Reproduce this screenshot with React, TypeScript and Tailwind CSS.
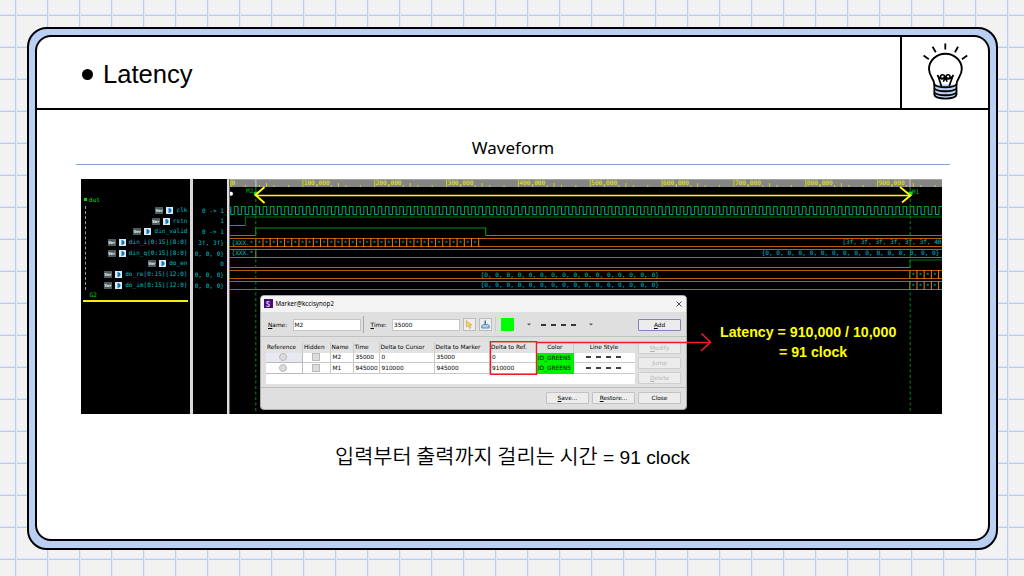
import React from "react";

const signals = [
  { name: "clk", value: "0 -> 1" },
  { name: "rstn", value: "1" },
  { name: "din_valid", value: "0 -> 1" },
  { name: "din_i[0:15][8:0]", value: "3f, 3f}" },
  { name: "din_q[0:15][8:0]", value: "0, 0, 0}" },
  { name: "do_en", value: "0" },
  { name: "do_re[0:15][12:0]", value: "0, 0, 0}" },
  { name: "do_im[0:15][12:0]", value: "0, 0, 0}" },
];

const PERIOD = 7.19;
const T0 = 230.8;
const CYAN = "#00a0a8";
const ORANGE = "#bb5e08";

const range = (n: number) => Array.from({ length: n }, (_, i) => i);

function Bulb() {
  return (
    <svg viewBox="918 38 56 66" className="h-[66px] w-14" fill="none" stroke="#000" strokeLinecap="round" strokeLinejoin="round">
      <path d="M945.3 43.6v5.800M932.600 46.800l3.200 5.400M958 46.800l-3 5.400M923.600 55.600l5.200 3.600M967.200 55.600l-5.200 3.600" strokeWidth="1.8" strokeLinecap="butt" />
      <path d="M934.3 84v10.5c0 5.5 22.2 5.5 22.2 0V84z" fill="#bcd0ee" stroke="none" />
      <path d="M934.4 84.5c-.3-6-5.4-8.200-5.400-15.500a16.400 15.300 0 0 1 32.800 0c0 7.300-5.100 9.500-5.400 15.500" strokeWidth="1.900" fill="#fff" />
      <path d="M941.200 85.500l-3.300-10M949.400 85.500l3.600-10M937.600 75.800c2 3 4.200 3.800 7.600 1.500 3.200 2.300 5.800 1.500 8-1.500M943.700 81l1.500-3.500 1.600 3.500" strokeWidth="1.700" />
      <circle cx="942.500" cy="76.800" r="2" strokeWidth="1.600" />
      <circle cx="948" cy="76.800" r="2" strokeWidth="1.600" />
      <path d="M934.300 84.500v10c1 5.400 21.200 5.400 22.200 0v-10M934.300 84.500c3 3.700 19.200 3.700 22.200 0M934.300 88.500c3 3.700 19.200 3.700 22.200 0M934.300 92.500c3 3.700 19.200 3.700 22.200 0" strokeWidth="1.800" />
    </svg>
  );
}

function clockPaths() {
  let high = "";
  let low = "";
  let x = T0;
  while (x < 942) {
    const up = x + PERIOD / 2;
    const down = x + PERIOD;
    low += `M${x} 214.500H${up}M${x} 206.500V214.500`;
    high += `M${up} 214.500V206.500H${down}`;
    x = down;
  }
  return { high, low };
}

function Waves() {
  const clock = clockPaths();
  return (
    <svg viewBox="230 179 712 235" width="712" height="235" className="block shrink-0" fill="none">
      <rect x="230" y="178" width="712" height="236" fill="#000" />
      <rect x="230" y="178.500" width="712" height="8.500" fill="#858585" />
      <rect x="230" y="179" width="712" height=".8" fill="#aaa" />
      <g stroke="#e6e600" strokeWidth=".8">
        {range(50).map((i) => {
          const x = 231 + i * 14.37;
          const major = i % 5 === 0;
          return <path key={i} d={`M${x} 187V${major ? 179.5 : 185}`} />;
        })}
        {range(10).map((i) => (
          <path key={i} d={`M${266.5 + i * 71.87} 187V183`} />
        ))}
      </g>
      <g fill="#f0f000" fontFamily="DejaVu Sans Mono, monospace" fontSize="6.200">
        <text x="231.500" y="185">0</text>
        {range(9).map((i) => (
          <text key={i} x={303.7 + i * 71.87} y="185" textLength="26" lengthAdjust="spacingAndGlyphs">{`${i + 1}00,000`}</text>
        ))}
      </g>
      <path d="M255.900 179v8.500M910 179v8.500" stroke="#ddd" strokeWidth=".8" />

      <path d={clock.low} stroke={CYAN} strokeWidth="1.100" />
      <path d={clock.high} stroke="#00a020" strokeWidth="1.100" />

      <g strokeWidth="1.100">
        <path d="M230 225.500H245.500M230 235.500H255.700M485.700 235.500H942M230 267.500H910" stroke={CYAN} />
        <path d="M245.500 225.500V217H942M910 267.500V260H942" stroke="#006c08" />
        <path d="M255.700 235.500V228H485.700V235.500" stroke="#009a10" />
      </g>
      <g stroke={ORANGE} strokeWidth="1">
        <path d="M230 238.500H942M230 246.500H942M230 249.500H942M230 257.500H942M230 270.500H942M230 278.500H942M230 281.500H942M230 289.500H942" />
        <path d="M255.800 249v9" stroke="#ef7a10" />
        {range(32).map((i) => (
          <path key={i} d={`M${255.8 + i * PERIOD} 238v9`} stroke="#f07c10" />
        ))}
        {range(5).map((i) => (
          <path key={i} d={`M${909.8 + i * PERIOD} 270v9M${909.8 + i * PERIOD} 281v9`} stroke="#f07c10" />
        ))}
      </g>
      <g fill="#00bcc4" fontFamily="DejaVu Sans Mono, monospace" fontSize="6.200">
        <text x="231.500" y="244.500" textLength="22">{"{XXX.*"}</text>
        <text x="231.500" y="255.300" textLength="22">{"{XXX.*"}</text>
        {range(31).map((i) => (
          <text key={i} x={257.5 + i * PERIOD} y="245">*</text>
        ))}
        {range(4).map((i) => (
          <React.Fragment key={i}>
            <text x={911.5 + i * PERIOD} y="276.800">*</text>
            <text x={911.5 + i * PERIOD} y="287.800">*</text>
          </React.Fragment>
        ))}
        <text x="842.300" y="244.300" textLength="99.300">{"{3f, 3f, 3f, 3f, 3f, 3f, 40"}</text>
        <text x="761.500" y="255.200" textLength="178">{"{0, 0, 0, 0, 0, 0, 0, 0, 0, 0, 0, 0, 0, 0, 0, 0}"}</text>
        <text x="480.500" y="276.500" textLength="178.500">{"{0, 0, 0, 0, 0, 0, 0, 0, 0, 0, 0, 0, 0, 0, 0, 0}"}</text>
        <text x="480.500" y="287.400" textLength="178.500">{"{0, 0, 0, 0, 0, 0, 0, 0, 0, 0, 0, 0, 0, 0, 0, 0}"}</text>
      </g>

      <path d="M255.800 188V413.500M910.200 188V413.500" stroke="#008a10" strokeWidth="1" strokeDasharray="3 2.500" />
      <g fill="#00b010" fontFamily="DejaVu Sans Mono, monospace" fontSize="6.200">
        <text x="246" y="193">M2</text>
        <text x="911.800" y="193.500">M1</text>
      </g>
      <rect x="254" y="191.500" width="4" height="4" rx="1" fill="#00e020" />
      <rect x="908.500" y="191.500" width="4" height="4" rx="1" fill="#00e020" />
      <circle cx="231" cy="193.700" r="2" fill="#fff" />
      <g stroke="#ffff00" strokeWidth="1.600">
        <path d="M256 195.500H910" />
        <path d="M264.500 187L255.500 195L264.500 203M900 187L910.500 195.500L902 202.500" strokeWidth="1.900" />
      </g>
    </svg>
  );
}

function SignalNames() {
  return (
    <div className="flex h-[235px] w-[109px] shrink-0 flex-col bg-black pt-[16px] font-['DejaVu_Sans_Mono',monospace] text-[6.1px] leading-[10.7px]">
      <div className="flex h-[10px] items-start gap-[2px] pl-[3px] leading-[9px] text-[#00e000]">
        <span className="mt-[3px] size-[3px] bg-[#00e000]" />
        dut
      </div>
      <div className="flex">
        <div className="mt-px ml-[4px] h-[84px] w-[4px] shrink-0 border-l border-dashed border-[#999]" />
        <div className="flex flex-1 flex-col items-end pr-[2.500px] text-[#00bcc4]">
          {signals.map((s) => (
            <div key={s.name} className="flex h-[10.700px] items-center whitespace-nowrap">
              <span className="flex h-[7px] w-[8px] items-center justify-center bg-[#4b5c60] text-[4px] leading-[7px] font-bold text-white">Ver</span>
              <span className="mr-[3px] ml-[3px] flex h-[7px] w-[7px] items-center justify-center bg-[#d8ecf8]">
                <svg viewBox="0 0 7 7" className="size-[7px]">
                  <path d="M2.500 1c4 0 4 5 0 5z" fill="#1674bd" />
                </svg>
              </span>
              {s.name}
            </div>
          ))}
        </div>
      </div>
      <div className="h-[8px] pt-px pl-[8.500px] leading-[6px] text-[#00d000]">G2</div>
      <div className="mt-px mr-[2px] ml-[2px] h-[2px] shrink-0 bg-[#f0f000]" />
    </div>
  );
}

function SignalValues() {
  return (
    <div className="h-[235px] w-[34px] shrink-0 overflow-hidden bg-black pt-[26px] pr-[3px] font-['DejaVu_Sans_Mono',monospace] text-[6.1px] text-[#00bcc4]">
      {signals.map((s) => (
        <div key={s.name} className="flex h-[10.700px] items-center justify-end whitespace-pre">{s.value}</div>
      ))}
    </div>
  );
}

function DialogButton({ label, mnemonic, muted, primary }: { label: string; mnemonic?: boolean; muted?: boolean; primary?: boolean }) {
  const tone = muted ? "text-[#b5b5b5] border-[#cfcfcf]" : primary ? "text-black border-[#8583b5]" : "text-black border-[#c2c2c2]";
  return (
    <div className={`flex h-[12px] w-[43px] shrink-0 items-center justify-center rounded-[1px] border bg-[#ececec] ${tone}`}>
      {mnemonic ? (
        <span>
          <span className="underline">{label[0]}</span>
          {label.slice(1)}
        </span>
      ) : (
        label
      )}
    </div>
  );
}

function Dashes({ className }: { className: string }) {
  return (
    <svg viewBox="0 0 36 2" className={className}>
      <path d="M0 1H5M10 1H15M20 1H25M30 1H35" stroke="#000" strokeWidth="1.400" />
    </svg>
  );
}

function Caret() {
  return (
    <svg viewBox="0 0 4 3" className="h-[3px] w-[4px]">
      <path d="M0 .5H4L2 2.500z" fill="#555" />
    </svg>
  );
}

const grid = "grid grid-cols-[37px_27.5px_23px_26px_55px_55.5px_47px_36.5px_61px]";
const cell = "flex items-center border-r border-b border-[#c9c9c9] pl-[2px] whitespace-nowrap";

const markers = [
  { name: "M2", time: "35000", cursor: "0", marker: "35000", ref: "0" },
  { name: "M1", time: "945000", cursor: "910000", marker: "945000", ref: "910000" },
];

function MarkerDialog() {
  return (
    <div className="flex h-[115px] w-[427px] flex-col overflow-hidden rounded-[4px] border border-[#aaa] bg-[#dfdfdf] font-['DejaVu_Sans',sans-serif] text-[5.8px] leading-[8px] text-black">
      <div className="flex h-[16px] shrink-0 items-center bg-[#f4f4f4] pr-[4px] pl-[2.500px] font-['Noto_Sans',sans-serif] text-[6.2px]">
        <span className="mr-[3px] flex size-[9px] items-center justify-center bg-[#451071] text-[8px] font-bold text-[#e0b5ff]">S</span>
        <span>Marker@kccisynop2</span>
        <svg viewBox="0 0 6 6" className="ml-auto size-[6px]">
          <path d="M.5 .5L5.500 5.500M5.500 .5L.5 5.500" stroke="#222" strokeWidth=".8" />
        </svg>
      </div>
      <div className="flex h-[25px] shrink-0 items-center border-b border-[#c2c2c2] pt-[2px] pr-[5px] pl-[7px]">
        <span className="w-[24.500px]"><span className="underline">N</span>ame:</span>
        <span className="flex h-[12px] w-[68px] items-center border border-[#c6c6c6] bg-white pl-px">M2</span>
        <span className="ml-[2.500px] h-[17px] w-px bg-[#aaa]" />
        <span className="ml-[6.500px] w-[21.500px]"><span className="underline">T</span>ime:</span>
        <span className="flex h-[12px] w-[68px] items-center border border-[#c6c6c6] bg-white pl-px">35000</span>
        <span className="ml-[2.500px] flex size-[13px] items-center justify-center border border-[#bbb] bg-[#eee]">
          <svg viewBox="0 0 8 9" className="h-[9px] w-[8px]">
            <path d="M1 .5L7 5H4.800L6 8L4.700 8.500L3.400 5.700L1.500 7z" fill="#f7cf5f" stroke="#c79a35" strokeWidth=".5" />
          </svg>
        </span>
        <span className="ml-[3px] flex size-[13px] items-center justify-center border border-[#bbb] bg-[#eee]">
          <svg viewBox="0 0 9 9" className="size-[9px]">
            <path d="M3.500 .5H5V4H3.500z" fill="#3b78a8" />
            <path d="M.8 5.500L2.500 4.500H6.500L8.200 5.500V8H.8z" fill="#a9d2ee" stroke="#3b78a8" strokeWidth=".8" />
          </svg>
        </span>
        <span className="ml-[3px] h-[15px] w-px bg-[#ccc]" />
        <span className="ml-[5px] size-[13px] bg-[#00ff00]" />
        <span className="ml-[13px] flex w-[4px]"><Caret /></span>
        <Dashes className="ml-[10px] h-[2px] w-[36px]" />
        <span className="ml-[12px] flex w-[4px]"><Caret /></span>
        <span className="ml-auto"><DialogButton label="Add" mnemonic primary /></span>
      </div>
      <div className="flex h-[51px] shrink-0 border-b border-[#bdbdbd] pt-[5px] pr-[5px] pl-[5px]">
        <div className="h-[42px] w-[369px] shrink-0 bg-white">
          <div className={`${grid} h-[11px] bg-[#e2e2e2]`}>
            {["Reference", "Hidden", "Name", "Time", "Delta to Cursor", "Delta to Marker", "Delta to Ref."].map((h) => (
              <div key={h} className="flex items-center border-r border-[#ccc] pl-px whitespace-nowrap">{h}</div>
            ))}
            <div className="flex items-center justify-center border-r border-[#ccc]">Color</div>
            <div className="flex items-center justify-center">Line Style</div>
          </div>
          {markers.map((m, i) => (
            <div key={m.name} className={`${grid} h-[10.500px]`}>
              <div className={`flex items-center justify-center border-r border-b border-[#bbb] pr-[2px] ${i === 0 ? "bg-[#e8e8f2]" : "bg-white"}`}>
                <span className="size-[8px] rounded-full border border-[#bbb] bg-[#dcdcdc]" />
              </div>
              <div className="flex items-center justify-center border-r border-b border-[#c9c9c9] pr-px">
                <span className="size-[8px] border border-[#bbb] bg-[#dcdcdc]" />
              </div>
              <div className={cell}>{m.name}</div>
              <div className={cell}>{m.time}</div>
              <div className={cell}>{m.cursor}</div>
              <div className={cell}>{m.marker}</div>
              <div className={cell}>{m.ref}</div>
              <div className="flex items-center bg-[#00f000] pl-px whitespace-nowrap">ID_GREEN5</div>
              <div className="flex items-center justify-center border-b border-[#c9c9c9]">
                <Dashes className="h-[2px] w-[36px]" />
              </div>
            </div>
          ))}
        </div>
        <div className="ml-auto flex flex-col gap-[3px]">
          <DialogButton label="Modify" mnemonic muted />
          <DialogButton label="Jump" mnemonic muted />
          <DialogButton label="Delete" mnemonic muted />
        </div>
      </div>
      <div className="flex flex-1 items-start justify-end gap-[3px] pt-[4px] pr-[5px]">
        <DialogButton label="Save..." mnemonic />
        <DialogButton label="Restore..." mnemonic />
        <DialogButton label="Close" />
      </div>
    </div>
  );
}

export default function App() {
  return (
    <div className="h-[576px] w-[1024px] overflow-hidden bg-[#f2f2f2] bg-[linear-gradient(to_right,transparent_15px,#b5cffa_15px,#b5cffa_16px,#e0e9f6_16px,#e0e9f6_17px,transparent_17px),linear-gradient(to_bottom,transparent_14px,#dbe6f7_14px,#dbe6f7_15px,#b5cffa_15px,#b5cffa_16px,transparent_16px)] bg-[length:32px_32px] pt-[27px] pl-[27px] font-['Liberation_Sans',sans-serif] text-black">
      <div className="h-[523px] w-[971px] rounded-[20px] border-2 border-black bg-[#b9cff3] p-[6px]">
        <div className="flex h-[506px] w-[955px] flex-col overflow-hidden rounded-[16px] border-2 border-black bg-white">
          <header className="flex h-[73px] w-full shrink-0 border-b-2 border-black">
            <div className="flex flex-1 items-center gap-[10px] pt-[3px] pl-[45px]">
              <span className="size-[11px] rounded-full bg-black" />
              <h1 className="text-[25.600px] leading-8">Latency</h1>
            </div>
            <div className="flex w-[88px] items-start justify-start border-l-2 border-black pt-px pl-[16px]">
              <Bulb />
            </div>
          </header>
          <main className="flex flex-col pl-[39px]">
            <div className="flex h-[55px] w-[874px] items-end justify-center border-b border-[#84a5cf] pb-[4px]">
              <h2 className="font-['Noto_Sans',sans-serif] text-[17px] leading-6">Waveform</h2>
            </div>
            <div className="relative mt-[14px] ml-[5px] flex h-[235px] w-[861px] overflow-hidden bg-[#cfcfcf]">
              <SignalNames />
              <div className="w-[3px] shrink-0 bg-[#d9d9d9]" />
              <SignalValues />
              <div className="w-[3px] shrink-0 border-r border-[#666] bg-[#ddd]" />
              <Waves />
              <div className="absolute top-[115.500px] left-[179px]">
                <MarkerDialog />
              </div>
              <svg viewBox="81 179 861 235" className="absolute inset-0 h-[235px] w-[861px]" fill="none" stroke="#ee1c24">
                <rect x="490.500" y="341.700" width="46" height="32.600" strokeWidth="1.400" />
                <path d="M537 342.500H710" strokeWidth="1.300" />
                <path d="M701.500 333.500L710.500 342.200L701 351" strokeWidth="1.600" />
              </svg>
              <div className="absolute top-[142.500px] left-[639px] text-[14.200px] leading-[20.500px] font-bold whitespace-nowrap text-[#ffff00]">
                <div>Latency = 910,000 / 10,000</div>
                <div className="pl-[59px]">= 91 clock</div>
              </div>
            </div>
            <p className="mt-[27px] w-[873px] text-center font-['Liberation_Sans','Noto_Sans_CJK_KR',sans-serif] text-[19.200px] leading-7 whitespace-nowrap">
              <span className="font-['Noto_Sans_CJK_KR',sans-serif] text-[20.800px] font-[350]">입력부터 출력까지 걸리는 시간</span> = 91 clock
            </p>
          </main>
        </div>
      </div>
    </div>
  );
}
